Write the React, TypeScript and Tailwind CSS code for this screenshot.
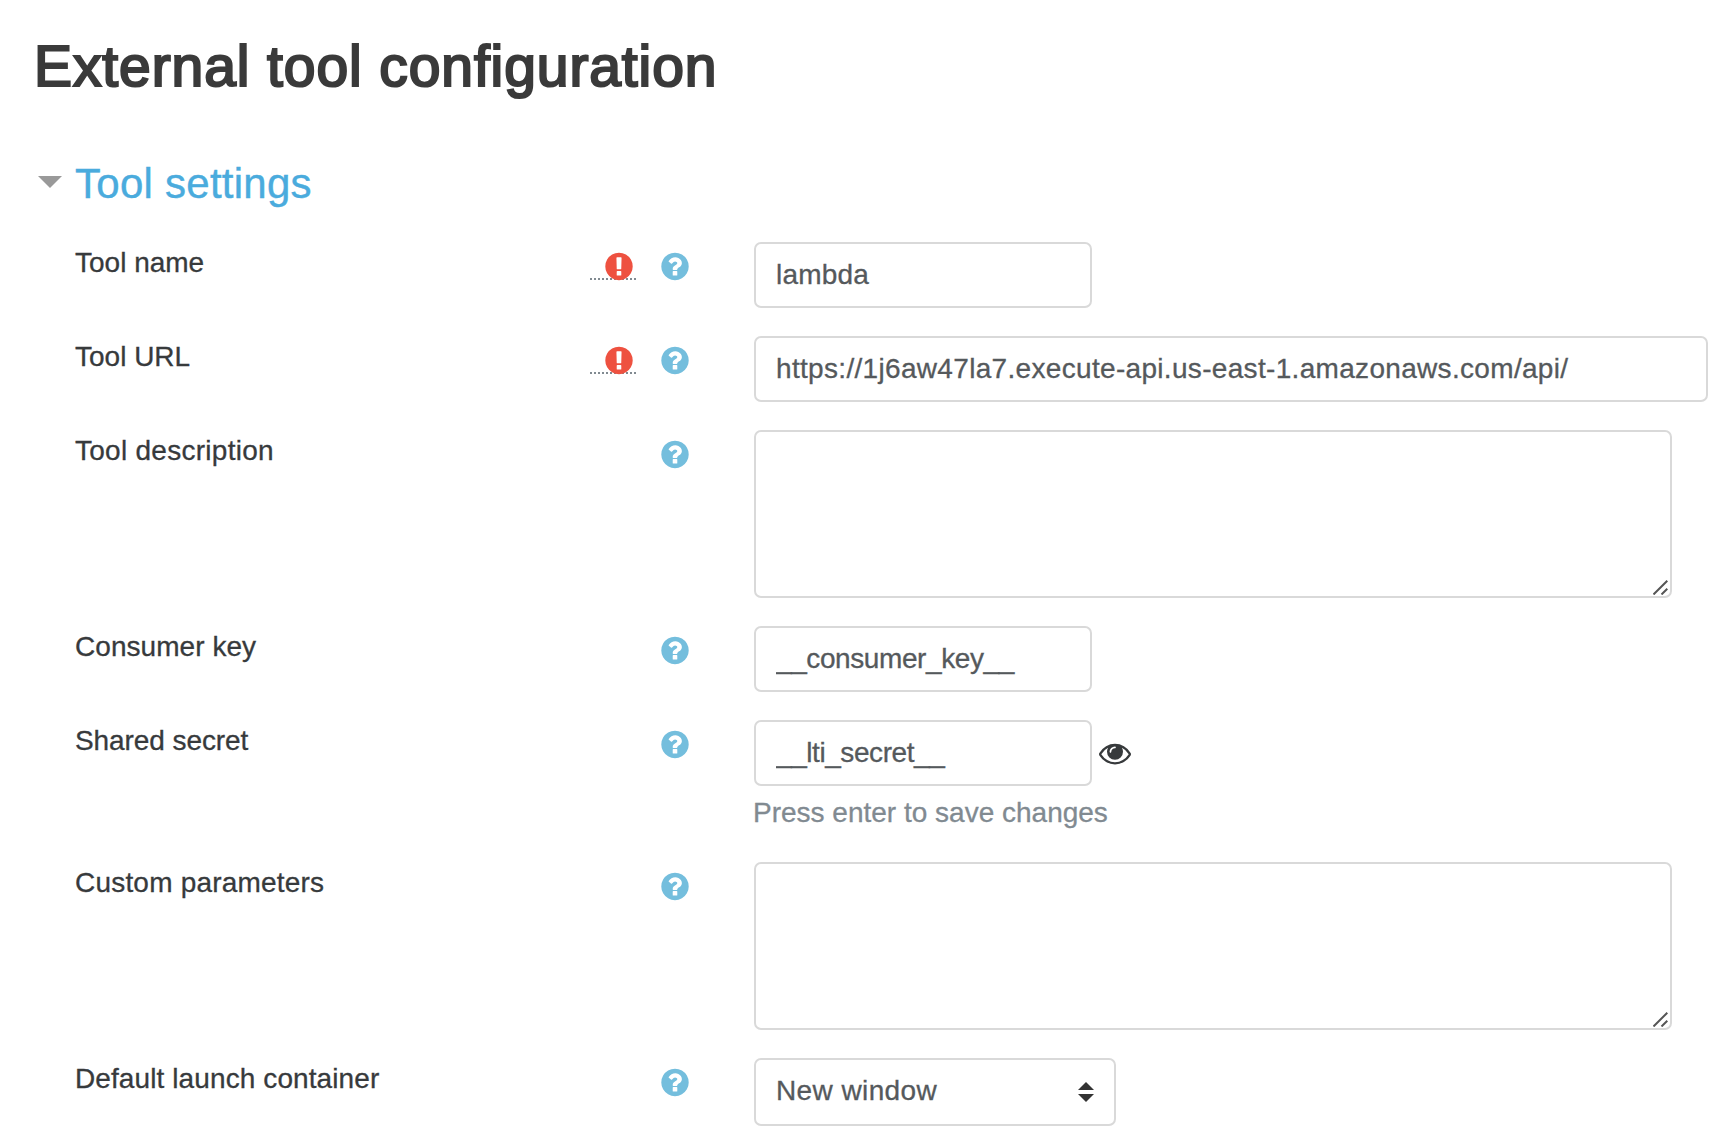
import type { ReactNode } from "react";

const controlClass =
  "block rounded-[7px] border-2 border-[#d9d9d9] bg-white pl-5 text-[28px] text-[#55595c] outline-none [-webkit-text-stroke:0.3px_#55595c]";

function HelpIcon() {
  return (
    <svg viewBox="0 -25 1792 1792" className="size-8 fill-[#74bedd]" aria-label="Help">
      <path d="M1024 1376v-192q0-14-9-23t-23-9h-192q-14 0-23 9t-9 23v192q0 14 9 23t23 9h192q14 0 23-9t9-23zm256-672q0-88-55.5-163t-138.5-116-170-41q-243 0-371 213-15 24 8 42l132 100q7 6 19 6 16 0 25-12 53-68 86-92 34-24 86-24 48 0 85.5 26t37.5 59q0 38-20 61t-68 45q-63 28-115.5 86.5t-52.5 125.5v36q0 14 9 23t23 9h192q14 0 23-9t9-23q0-19 21.5-49.5t54.5-49.5q32-18 49-28.5t46-35 44.5-48 28-60.5 12.5-81zm384 192q0 209-103 385.5t-279.5 279.5-385.5 103-385.5-103-279.5-279.5-103-385.5 103-385.5 279.5-279.5 385.5-103 385.5 103 279.5 279.5 103 385.5z" />
    </svg>
  );
}

function RequiredIcon() {
  return (
    <span className="relative mr-[23px] flex h-8 w-[46px] justify-end">
      <svg viewBox="0 0 46 2" className="absolute top-[28px] left-0 h-[2px] w-[46px] fill-[#818a91]">
        {Array.from({ length: 12 }, (_, i) => (
          <rect key={i} x={i * 4} y="0" width="2" height="2" />
        ))}
      </svg>
      <svg viewBox="0 -25 1792 1792" className="relative mr-[1px] size-8 fill-[#ee5140]" aria-label="Required">
        <path d="M896 128q209 0 385.5 103t279.5 279.5 103 385.5-103 385.5-279.5 279.5-385.5 103-385.5-103-279.5-279.5-103-385.5 103-385.5 279.5-279.5 385.5-103zm128 1247v-190q0-14-9-23.5t-22-9.5h-192q-13 0-23 10t-10 23v190q0 13 10 23t23 10h192q13 0 22-9.5t9-23.5zm-2-344l18-621q0-12-10-18-10-8-24-8h-220q-14 0-24 8-10 6-10 18l17 621q0 10 10 17.5t24 7.5h185q14 0 23.5-7.5t10.5-17.5z" />
      </svg>
    </span>
  );
}

function EyeIcon() {
  return (
    <svg viewBox="0 0 1792 1792" className="mt-[16.5px] ml-[7px] size-8 fill-[#373a3c]">
      <path d="M1664 960q-152-236-381-353 61 104 61 225 0 185-131.5 316.5t-316.5 131.5-316.5-131.5-131.5-316.5q0-121 61-225-229 117-381 353 133 205 333.5 326.5t434.5 121.5 434.5-121.5 333.5-326.5zm-720-384q0-20-14-34t-34-14q-125 0-214.5 89.5t-89.5 214.5q0 20 14 34t34 14 34-14 14-34q0-86 61-147t147-61q20 0 34-14t14-34zm848 384q0 34-20 69-140 230-376.5 368.5t-499.5 138.5-499.5-139-376.5-368q-20-35-20-69t20-69q140-229 376.5-368t499.5-139 499.5 139 376.5 368q20 35 20 69z" />
    </svg>
  );
}

function Row({ label, required, labelClass, children }: { label: string; required?: boolean; labelClass: string; children: ReactNode }) {
  return (
    <div className="flex items-start">
      <div className="flex w-[679px] shrink-0 items-start">
        <span className={`mt-[5px] text-[28px] leading-[32px] whitespace-nowrap [-webkit-text-stroke:0.3px_#373a3c] ${labelClass}`}>{label}</span>
        <div className="mt-2 mr-[63px] ml-auto flex">
          {required && <RequiredIcon />}
          <HelpIcon />
        </div>
      </div>
      {children}
    </div>
  );
}

function TextInput({ value, className }: { value: string; className: string }) {
  return <input type="text" defaultValue={value} spellCheck={false} className={`${controlClass} h-[66px] pb-[1px] ${className}`} />;
}

function TextArea() {
  return (
    <div className="relative">
      <textarea className={`${controlClass} h-[168px] w-[918px] resize-none`} />
      <svg viewBox="0 0 15 15" className="absolute right-[4px] bottom-[3px] size-[15px] fill-none stroke-[#555] stroke-2">
        <path d="M.5 14.5 14.3.7M8.5 14.5l5.8-5.8" />
      </svg>
    </div>
  );
}

export default function App() {
  return (
    <main className="h-[1148px] w-[1726px] overflow-hidden bg-white pl-[35px] font-['Liberation_Sans',Arial,sans-serif] text-[#373a3c]">
      <h1 className="-ml-px pt-[34px] text-[57px] leading-[64px] font-normal tracking-[0.9px] whitespace-nowrap text-[#3a3a3a] [-webkit-text-stroke:2.2px_#3a3a3a]">
        External tool configuration
      </h1>
      <h2 className="mt-[62px] ml-px flex h-[48px] items-start text-[42px] leading-[48px] tracking-[0.26px] text-[#4aabdd] [-webkit-text-stroke:0.4px_#4aabdd]">
        <svg viewBox="0 0 24 12" className="mt-[16px] mr-[13px] ml-[2px] h-3 w-6 shrink-0 fill-[#999]">
          <path d="M0 0h24L12 12z" />
        </svg>
        Tool settings
      </h2>
      <form className="mt-[34px] ml-10 flex flex-col gap-7">
        <Row label="Tool name" required labelClass="tracking-normal">
          <TextInput value="lambda" className="w-[338px] tracking-[0.2px]" />
        </Row>
        <Row label="Tool URL" required labelClass="tracking-normal">
          <TextInput value="https://1j6aw47la7.execute-api.us-east-1.amazonaws.com/api/" className="w-[954px] tracking-[0.32px]" />
        </Row>
        <Row label="Tool description" labelClass="tracking-[0.27px]">
          <TextArea />
        </Row>
        <Row label="Consumer key" labelClass="tracking-[0.05px]">
          <TextInput value="__consumer_key__" className="w-[338px] tracking-[-0.41px]" />
        </Row>
        <Row label="Shared secret" labelClass="tracking-[-0.08px]">
          <div>
            <div className="flex">
              <TextInput value="__lti_secret__" className="w-[338px] tracking-[-0.43px]" />
              <EyeIcon />
            </div>
            <p className="mt-[11px] -ml-px h-[37px] text-[28px] leading-[32px] whitespace-nowrap text-[#818a91] [-webkit-text-stroke:0.3px_#818a91]">Press enter to save changes</p>
          </div>
        </Row>
        <Row label="Custom parameters" labelClass="tracking-[0.2px]">
          <TextArea />
        </Row>
        <Row label="Default launch container" labelClass="tracking-[0.1px]">
          <div className="relative">
            <select className={`${controlClass} h-[68px] w-[362px] appearance-none pb-[2px] tracking-[0.4px]`}>
              <option>New window</option>
            </select>
            <svg viewBox="0 0 16 20" className="pointer-events-none absolute top-[24px] right-[22px] h-5 w-4 fill-[#333]">
              <path d="M0 8h16L8 0zM0 12h16l-8 8z" />
            </svg>
          </div>
        </Row>
      </form>
    </main>
  );
}
